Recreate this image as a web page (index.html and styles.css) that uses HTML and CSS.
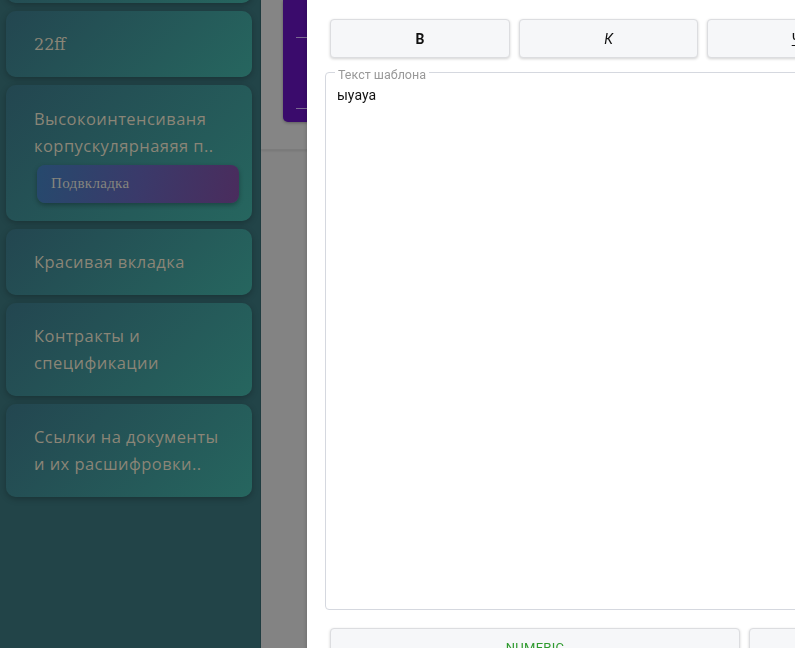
FILE: index.html
```html
<!DOCTYPE html>
<html lang="ru">
<head>
<meta charset="utf-8">
<title>Шаблон</title>
<link rel="stylesheet" href="styles.css">
</head>
<body>
<div class="app">
  <aside class="sidebar">
    <div class="tabs">
      <div class="tab tab-hidden"><span class="tab-title">Главная</span></div>
      <div class="tab"><span class="tab-title serif">22ff</span></div>
      <div class="tab tab-multi">
        <span class="tab-title">Высокоинтенсиваня корпускулярнаяяя п..</span>
        <div class="subtab">Подвкладка</div>
      </div>
      <div class="tab"><span class="tab-title">Красивая вкладка</span></div>
      <div class="tab"><span class="tab-title">Контракты и спецификации</span></div>
      <div class="tab"><span class="tab-title">Ссылки на документы и их расшифровки..</span></div>
    </div>
  </aside>
  <main class="content">
    <div class="panel">
      <div class="header-card">
        <div class="hc-line"></div>
        <div class="hc-line"></div>
      </div>
    </div>
  </main>
</div>

<div class="modal">
  <div class="format-row">
    <button class="fmt bold">B</button>
    <button class="fmt italic">К</button>
    <button class="fmt under"><span>Ч</span></button>
  </div>
  <div class="field">
    <span class="field-label">Текст шаблона</span>
    <div class="field-text">ыyaya</div>
  </div>
  <div class="var-row">
    <button class="var">NUMERIC</button>
    <button class="var"></button>
  </div>
</div>
</body>
</html>
```

FILE: styles.css
```css
* { box-sizing: border-box; }
html, body { margin: 0; padding: 0; height: 100%; overflow: hidden; }
body { background: #838383; font-family: "Open Sans", sans-serif; }

.app { display: flex; height: 648px; }

.sidebar {
  width: 261px;
  flex: none;
  background: #224448;
  border-right: 1px solid #1f3c40;
  padding: 0 8px 0 6px;
  overflow: hidden;
}
.tabs {
  display: flex;
  flex-direction: column;
  gap: 8px;
  margin-top: -63px;
}
.tab {
  border-radius: 10px;
  background: linear-gradient(135deg, #234650 0%, #26665f 100%);
  box-shadow: 0 2px 6px rgba(0,0,0,0.25);
  padding: 19.5px 13px 19.5px 28px;
  color: #8a8577;
  font-family: "Open Sans", sans-serif;
  font-size: 16.5px;
  line-height: 27px;
  letter-spacing: 0.45px;
}
.tab-hidden .tab-title { visibility: hidden; }
.tab-title { display: block; padding-right: 14px; }
.tab-multi { padding-bottom: 18px; }
.serif { font-family: "DejaVu Serif", serif; font-size: 16px; letter-spacing: 0; }
.subtab {
  margin: 6px 0 0 3px;
  height: 38px;
  border-radius: 8px;
  background: linear-gradient(100deg, #26496d 0%, #3a3a6a 50%, #4a2c5d 100%);
  box-shadow: 0 2px 5px rgba(0,0,0,0.3);
  padding-left: 14px;
  display: flex;
  align-items: center;
  font-family: "Liberation Serif", serif;
  font-size: 15px;
  letter-spacing: 0.3px;
  color: #85857e;
}

.content { flex: 1; }
.panel {
  height: 150px;
  background: #858585;
  border-bottom: 1px solid #7b7b7b;
  box-shadow: 0 1px 2px rgba(0,0,0,0.1);
  padding-left: 22px;
}
.header-card {
  height: 122px;
  background: #3a0b6c;
  border-bottom-left-radius: 5px;
  box-shadow: 0 1px 3px rgba(0,0,0,0.3);
  padding-top: 37px;
  padding-left: 13px;
}
.hc-line { height: 1px; background: #7c6a92; margin-bottom: 70px; }

.modal {
  position: fixed;
  left: 307px;
  top: 0;
  width: 700px;
  height: 700px;
  background: #fff;
  box-shadow: -1px 0 3px rgba(0,0,0,0.15);
  padding: 19px 0 0 23px;
  font-family: Roboto, "Liberation Sans", sans-serif;
}
.format-row { display: flex; gap: 9px; }
.fmt, .var {
  flex: none;
  width: 179px;
  height: 39px;
  background: #f6f7f9;
  border: 1px solid #dcdde0;
  border-radius: 4px;
  box-shadow: 0 1px 3px rgba(0,0,0,0.18);
  font-family: Roboto, "Liberation Sans", sans-serif;
  font-size: 14px;
  color: #111;
  padding: 0;
}
.fmt.bold { width: 180px; font-weight: 700; }
.italic { font-style: italic; font-weight: 400; }
.under span { text-decoration: underline; }

.field {
  position: relative;
  margin: 14px 0 0 -5px;
  height: 538px;
  border: 1px solid #d5d8df;
  border-radius: 4px;
  padding: 14px 11px;
}
.field-label {
  position: absolute;
  top: -5px;
  left: 9px;
  padding: 0 3px;
  background: #fff;
  font-size: 12.5px;
  line-height: 14px;
  color: #999;
}
.field-text { font-size: 14px; line-height: 16px; color: #111; }

.var-row { display: flex; gap: 9px; margin-top: 18px; }
.var {
  width: 410px;
  height: 38px;
  color: #2e9a2e;
  font-size: 13px;
  letter-spacing: 0.3px;
}
```
